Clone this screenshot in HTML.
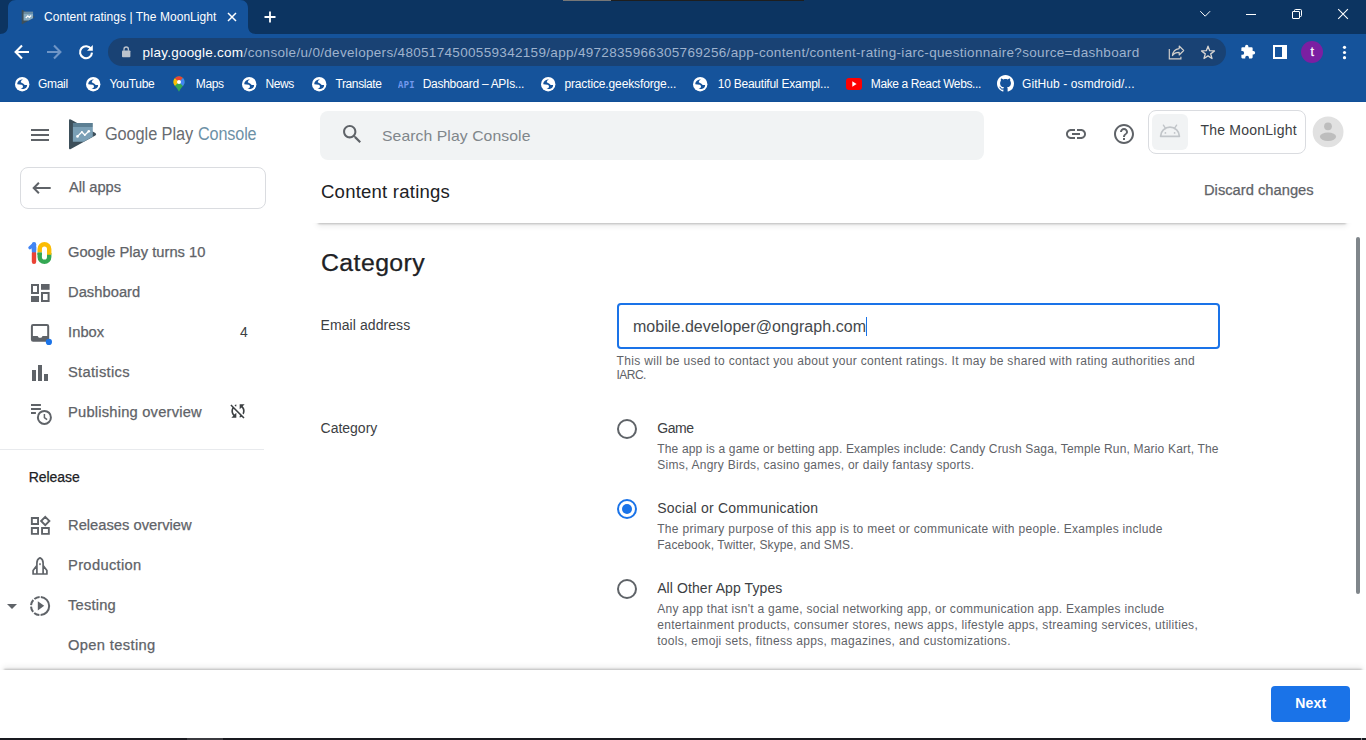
<!DOCTYPE html>
<html lang="en"><head><meta charset="utf-8"><title>Content ratings | The MoonLight</title>
<style>
html,body{margin:0;padding:0;}
body{width:1366px;height:740px;overflow:hidden;position:relative;background:#fff;font-family:"Liberation Sans",sans-serif;}
.a{position:absolute;}
.tx{position:absolute;white-space:nowrap;line-height:1;transform-origin:0 0;}
.m{-webkit-text-stroke:0.25px currentColor;}
svg{position:absolute;overflow:visible;}
</style></head><body>
<!-- ===== browser chrome ===== -->
<div class="a" style="left:0;top:0;width:1366px;height:34px;background:#0c3461;"></div>
<div class="a" style="left:0;top:34px;width:1366px;height:68px;background:#15539b;"></div>
<div class="a" style="left:0;top:101px;width:1366px;height:1px;background:#114f98;"></div>
<div class="a" style="left:563px;top:0;width:48px;height:1px;background:#777;"></div>
<div class="a" style="left:611px;top:0;width:193px;height:1px;background:#1e1e1e;"></div>
<!-- active tab -->
<svg style="left:0;top:0" width="260" height="34" viewBox="0 0 260 34"><path d="M0 34 C5 34 8 31 8 26 L8 8 C8 3 11 0 16 0 L240 0 C245 0 248 3 248 8 L248 26 C248 31 251 34 256 34 Z" fill="#15539b"/></svg>
<!-- favicon -->
<svg style="left:0;top:0" width="40" height="30" viewBox="0 0 40 30"><g transform="translate(21.7 9.8) scale(0.478) translate(-69 -119.2)">
<path d="M69 120.6 Q69 118.6 70.8 119.6 L95.4 133 Q97 134.2 95.4 135.4 L70.8 149 Q69 150 69 148 Z" fill="#3d4f5a"/>
<path d="M72.9 123 H92.8 V127 H72.9 Z" fill="#6a8da2"/>
<path d="M72.9 127 H92.8 V136.8 L83.6 141.8 H72.9 Z" fill="#86abc1"/>
<path d="M77.5 136.4 L81.9 132 L84.8 135 L88.8 131.2" stroke="#fff" stroke-width="2.4" fill="none"/>
</g></svg>
<!-- tab close -->
<svg style="left:227px;top:12px" width="10" height="10" viewBox="0 0 10 10"><path d="M1 1 L9 9 M9 1 L1 9" stroke="#fff" stroke-width="1.5" fill="none"/></svg>
<!-- new tab -->
<svg style="left:264px;top:11px" width="12" height="12" viewBox="0 0 12 12"><path d="M6 0.5 V11.5 M0.5 6 H11.5" stroke="#fff" stroke-width="1.8" fill="none"/></svg>
<!-- window controls -->
<svg style="left:1199px;top:10px" width="12" height="8" viewBox="1199 10 12 8"><path d="M1200.3 11.2 L1205.2 16.2 L1210.1 11.2" stroke="#fff" stroke-width="1" fill="none"/></svg>
<div class="a" style="left:1246px;top:14px;width:10px;height:1px;background:#fff;"></div>
<svg style="left:1291px;top:8px" width="12" height="12" viewBox="1291 8 12 12"><path d="M1292.5 12 Q1292.5 11.5 1293 11.5 H1299 Q1299.5 11.5 1299.5 12 V18 Q1299.5 18.5 1299 18.5 H1293 Q1292.5 18.5 1292.5 18 Z M1294.5 11.5 V10.5 Q1294.5 9.5 1295.5 9.5 H1300.5 Q1301.5 9.5 1301.5 10.5 V15.5 Q1301.5 16.5 1300.5 16.5 H1299.5" stroke="#fff" stroke-width="1" fill="none"/></svg>
<svg style="left:1337px;top:8px" width="12" height="12" viewBox="1337 8 12 12"><path d="M1338.2 9.2 L1347.9 18.9 M1347.9 9.2 L1338.2 18.9" stroke="#fff" stroke-width="1.05" fill="none"/></svg>
<!-- nav arrows -->
<svg style="left:14px;top:44px" width="16" height="16" viewBox="0 0 16 16"><path d="M15 8 H2 M8 1.6 L1.6 8 L8 14.4" stroke="#fff" stroke-width="2.1" fill="none"/></svg>
<svg style="left:46px;top:44px" width="16" height="16" viewBox="0 0 16 16"><path d="M1 8 H14 M8 1.6 L14.4 8 L8 14.4" stroke="#6f95c6" stroke-width="2.1" fill="none"/></svg>
<svg style="left:78px;top:44px" width="16" height="16" viewBox="0 0 16 16"><path d="M13.2 5.2 A6 6 0 1 0 14 8.6" stroke="#fff" stroke-width="2.1" fill="none"/><path d="M14.8 1 V6.8 H9 Z" fill="#fff"/></svg>
<!-- omnibox -->
<div class="a" style="left:108px;top:38px;width:1118px;height:28px;border-radius:14px;background:#194274;"></div>
<svg style="left:122px;top:46px" width="9" height="12" viewBox="0 0 9 12"><rect x="0" y="4.4" width="8.4" height="6.8" rx="0.9" fill="#bcc3cc"/><path d="M2 4.8 V3.2 A2.2 2.2 0 0 1 6.4 3.2 V4.8" stroke="#bcc3cc" stroke-width="1.3" fill="none"/></svg>
<!-- share -->
<svg style="left:1168px;top:45px" width="17" height="15" viewBox="1168 45 17 15"><path d="M1169.3 49 V58.8 H1180.9 V56.8" stroke="#d3d0cc" stroke-width="1.15" fill="none"/><path d="M1179.2 46 L1183.7 50.5 L1179.2 55 V52.4 C1176 52.4 1173.8 53.4 1172.4 55.6 C1172.8 52 1175 49.2 1179.2 48.6 Z" stroke="#d3d0cc" stroke-width="1.1" fill="none" stroke-linejoin="round"/></svg>
<!-- star -->
<svg style="left:1200px;top:45px" width="16" height="15" viewBox="1200 45 16 15"><path d="M1208.00 46.20 L1209.68 50.69 L1214.47 50.90 L1210.71 53.88 L1212.00 58.50 L1208.00 55.85 L1204.00 58.50 L1205.29 53.88 L1201.53 50.90 L1206.32 50.69 Z" stroke="#d9d6d3" stroke-width="1.3" fill="none" stroke-linejoin="round"/></svg>
<!-- puzzle -->
<svg style="left:1240.6px;top:44.4px" width="14.8" height="14.8" viewBox="0 0 16 16"><path d="M6.2 0.8 A1.8 1.8 0 0 1 8 2.6 V3.4 H11.4 A1.2 1.2 0 0 1 12.6 4.6 V7.6 H13.4 A1.9 1.9 0 0 1 13.4 11.4 H12.6 V14.4 A1.2 1.2 0 0 1 11.400000000000002 15.6 H8.6 V14.6 A2 2 0 0 0 4.6 14.6 V15.6 H1.6 A1.2 1.2 0 0 1 0.4 14.4 V11.6 H1.4 A2 2 0 0 0 1.4 7.6 H0.4 V4.6 A1.2 1.2 0 0 1 1.6 3.4 H4.4 V2.6 A1.8 1.8 0 0 1 6.2 0.8 Z" fill="#fff"/></svg>
<!-- side panel -->
<svg style="left:1273px;top:45px" width="14" height="14" viewBox="0 0 14 14"><path d="M0 0 H14 V14 H0 Z M2 2 V12 H9 V2 Z" fill="#fff" fill-rule="evenodd"/></svg>
<!-- avatar -->
<div class="a" style="left:1301px;top:41px;width:22px;height:22px;border-radius:50%;background:#7b1fa2;"></div>
<!-- menu dots -->
<svg style="left:1342px;top:45px" width="5" height="15" viewBox="0 0 5 15"><circle cx="2.5" cy="2.3" r="1.6" fill="#fff"/><circle cx="2.5" cy="7.5" r="1.6" fill="#fff"/><circle cx="2.5" cy="12.7" r="1.6" fill="#fff"/></svg>
<!-- bookmark icons -->
<svg width="0" height="0" style="position:absolute"><defs>
<g id="globe"><circle cx="7.2" cy="7.2" r="7.2" fill="#fff"/><path d="M2.3 7.3 C2.2 4.6 4.8 2.4 8 2.3 C6.4 3.4 5.6 4.4 5.9 5.4 C7 6 8 6 8.6 6.9 C9.6 8.2 11 8.2 12.1 7.9 C12.2 9.8 11.2 11 10 11.4 C8.6 12 6.8 12.2 5.6 11.8 C7 11.4 8 10.6 8 9.8 C8 8.8 7.6 8 6.6 7.7 C5.2 7.4 3.6 7.6 2.3 7.3 Z" fill="#15539b"/></g>
</defs></svg>
<svg style="left:14.8px;top:76.8px" width="15" height="15"><use href="#globe"/></svg>
<svg style="left:85.8px;top:76.8px" width="15" height="15"><use href="#globe"/></svg>
<svg style="left:241.7px;top:76.8px" width="15" height="15"><use href="#globe"/></svg>
<svg style="left:311.9px;top:76.8px" width="15" height="15"><use href="#globe"/></svg>
<svg style="left:541px;top:76.8px" width="15" height="15"><use href="#globe"/></svg>
<svg style="left:693.4px;top:76.8px" width="15" height="15"><use href="#globe"/></svg>
<!-- maps pin -->
<svg style="left:173px;top:76px" width="12" height="16" viewBox="0 0 12 16"><path d="M6 0.3 A5.6 5.6 0 0 0 0.4 5.9 C0.4 9.4 4 11 6 15.7 C8 11 11.6 9.4 11.6 5.9 A5.6 5.6 0 0 0 6 0.3 Z" fill="#34a853"/><path d="M6 0.3 A5.6 5.6 0 0 0 1.7 2.3 L6 5.9 L10 1.9 A5.6 5.6 0 0 0 6 0.3 Z" fill="#ea4335"/><path d="M1.7 2.3 A5.6 5.6 0 0 0 0.4 5.9 C0.4 7.4 1 8.6 2 9.8 L6 5.9 Z" fill="#fbbc04"/><path d="M10 1.9 L6 5.9 L9.8 10 C10.8 8.8 11.6 7.6 11.6 5.9 A5.6 5.6 0 0 0 10 1.9 Z" fill="#4285f4"/><circle cx="6" cy="5.9" r="2" fill="#fff"/></svg>
<!-- youtube -->
<svg style="left:846px;top:78px" width="16" height="12" viewBox="0 0 16 12"><rect x="0" y="0" width="16" height="12" rx="3.2" fill="#ff0000"/><path d="M6.3 3.2 L10.6 6 L6.3 8.8 Z" fill="#fff"/></svg>
<!-- github -->
<svg style="left:997px;top:75px" width="17" height="17" viewBox="0 0 16 16"><path fill="#fff" d="M8 0C3.58 0 0 3.58 0 8c0 3.54 2.29 6.53 5.47 7.59.4.07.55-.17.55-.38 0-.19-.01-.82-.01-1.49-2.01.37-2.53-.49-2.69-.94-.09-.23-.48-.94-.82-1.13-.28-.15-.68-.52-.01-.53.63-.01 1.08.58 1.23.82.72 1.21 1.87.87 2.33.66.07-.52.28-.87.51-1.07-1.78-.2-3.64-.89-3.64-3.95 0-.87.31-1.59.82-2.15-.08-.2-.36-1.02.08-2.12 0 0 .67-.21 2.2.82.64-.18 1.32-.27 2-.27s1.36.09 2 .27c1.53-1.04 2.2-.82 2.2-.82.44 1.1.16 1.92.08 2.12.51.56.82 1.27.82 2.15 0 3.07-1.87 3.75-3.65 3.95.29.25.54.73.54 1.48 0 1.07-.01 1.93-.01 2.2 0 .21.15.46.55.38A8.01 8.01 0 0 0 16 8c0-4.42-3.58-8-8-8z"/></svg>
<!-- ===== page ===== -->
<!-- hamburger -->
<div class="a" style="left:31px;top:129px;width:18px;height:2px;background:#5f6368;"></div>
<div class="a" style="left:31px;top:134px;width:18px;height:2px;background:#5f6368;"></div>
<div class="a" style="left:31px;top:139px;width:18px;height:2px;background:#5f6368;"></div>
<!-- logo -->
<svg style="left:68px;top:118px" width="30" height="33" viewBox="68 118 30 33">
<path d="M69 120.6 Q69 118.6 70.8 119.6 L95.4 133 Q97 134.2 95.4 135.4 L70.8 149 Q69 150 69 148 Z" fill="#3d4f5a"/>
<path d="M72.9 123 H92.8 V127 H72.9 Z" fill="#5c7f93"/>
<path d="M72.9 127 H92.8 V136.8 L83.6 141.8 H72.9 Z" fill="#7ba0b6"/>
<path d="M77.5 136.4 L81.9 132 L84.8 135 L88.8 131.2" stroke="#fff" stroke-width="1.3" fill="none"/>
<circle cx="77.5" cy="136.4" r="1.3" fill="#fff"/><circle cx="88.8" cy="131.2" r="1.3" fill="#fff"/><circle cx="81.9" cy="132" r="0.9" fill="#fff"/><circle cx="84.8" cy="135" r="0.9" fill="#fff"/>
</svg>
<!-- all apps -->
<div class="a" style="left:20px;top:167px;width:244px;height:40px;border:1px solid #dadce0;border-radius:8px;"></div>
<svg style="left:32px;top:180px" width="20" height="16" viewBox="32 180 20 16"><path d="M50.7 188 H34 M38.9 182.8 L33.7 188 L38.9 193.2" stroke="#5f6368" stroke-width="2" fill="none"/></svg>
<!-- search -->
<div class="a" style="left:320px;top:111px;width:664px;height:49px;border-radius:8px;background:#f1f3f4;"></div>
<svg style="left:339.9px;top:121.6px" width="24.6" height="24.6" viewBox="0 0 24 24"><path fill="#5f6368" d="M15.5 14h-.790l-.280-.270C15.410 12.590 16 11.110 16 9.500 16 5.910 13.090 3 9.500 3S3 5.910 3 9.500 5.910 16 9.500 16c1.610 0 3.090-.590 4.230-1.570l.270.280v.790l5 4.990L20.490 19l-4.990-5zm-6 0C7.010 14 5 11.990 5 9.500S7.010 5 9.500 5 14 7.010 14 9.500 11.990 14 9.500 14z"/></svg>
<!-- link icon -->
<svg style="left:1064px;top:122px" width="24" height="24" viewBox="0 0 24 24"><path fill="#5f6368" d="M3.9 12c0-1.71 1.390-3.100 3.100-3.100h4V7H7c-2.760 0-5 2.240-5 5s2.240 5 5 5h4v-1.900H7c-1.710 0-3.100-1.390-3.100-3.100zM8 13h8v-2H8v2zm9-6h-4v1.900h4c1.710 0 3.100 1.390 3.100 3.100s-1.390 3.100-3.100 3.100h-4V17h4c2.760 0 5-2.240 5-5s-2.240-5-5-5z"/></svg>
<!-- help icon -->
<svg style="left:1112px;top:122px" width="24" height="24" viewBox="0 0 24 24"><path fill="#5f6368" d="M11 18h2v-2h-2v2zm1-16C6.480 2 2 6.480 2 12s4.480 10 10 10 10-4.480 10-10S17.520 2 12 2zm0 18c-4.410 0-8-3.590-8-8s3.590-8 8-8 8 3.590 8 8-3.590 8-8 8zm0-14c-2.210 0-4 1.790-4 4h2c0-1.100.900-2 2-2s2 .900 2 2c0 2-3 1.750-3 5h2c0-2.250 3-2.500 3-5 0-2.210-1.790-4-4-4z"/></svg>
<!-- app chip -->
<div class="a" style="left:1148px;top:110px;width:156px;height:42px;border:1px solid #dadce0;border-radius:8px;"></div>
<div class="a" style="left:1152px;top:114px;width:36px;height:36px;border-radius:6px;background:#f1f3f4;"></div>
<svg style="left:1158px;top:123px" width="24" height="16" viewBox="1158 123 24 16"><path d="M1160.6 136.3 A9.4 9.1 0 0 1 1179.4 136.3 Z" stroke="#c1c5c9" stroke-width="1.7" fill="none" stroke-linejoin="round"/><path d="M1163.4 125.2 L1165.7 128.6 M1176.6 125.2 L1174.3 128.6" stroke="#c1c5c9" stroke-width="1.4" stroke-linecap="round"/><circle cx="1165.4" cy="132.9" r="0.9" fill="#c1c5c9"/><circle cx="1174.6" cy="132.9" r="0.9" fill="#c1c5c9"/></svg>
<!-- avatar -->
<svg style="left:1312px;top:116px" width="32" height="32" viewBox="1312 116 32 32"><circle cx="1328.1" cy="131.9" r="15.4" fill="#e1e1e1"/><circle cx="1328" cy="126.3" r="3.9" fill="#bdbdbd"/><ellipse cx="1328" cy="136.8" rx="8.1" ry="4.2" fill="#bdbdbd"/></svg>
<!-- header shadow -->
<div class="a" style="left:300px;top:223px;width:1066px;height:12px;overflow:hidden;"><div class="a" style="left:18px;top:-30px;width:1028px;height:30px;background:#fff;box-shadow:0 1px 2px rgba(0,0,0,.22),0 2px 6px 1px rgba(0,0,0,.08);"></div></div>
<!-- scrollbar -->
<div class="a" style="left:1356px;top:237px;width:4px;height:357px;border-radius:2px;background:#80868b;"></div>
<!-- sidebar icons -->
<!-- 10 -->
<svg style="left:28px;top:242px" width="24" height="22" viewBox="28 242 24 22">
<path d="M34 253 V261.8" stroke="#ea4335" stroke-width="4.4" stroke-linecap="round" fill="none"/>
<path d="M34 244.3 V250" stroke="#4285f4" stroke-width="4.4" stroke-linecap="round" fill="none"/>
<rect x="31.8" y="247" width="4.4" height="5.3" fill="#4285f4"/>
<path d="M29.9 247.7 L33.6 244.5" stroke="#4285f4" stroke-width="3.2" stroke-linecap="round" fill="none"/>
<path d="M39.7 253 V257 A4.75 4.75 0 0 0 49.2 257 V253" stroke="#34a853" stroke-width="4.4" fill="none"/>
<path d="M39.7 252.6 V249 A4.75 4.75 0 0 1 49.2 249 V254.8" stroke="#fbbc04" stroke-width="4.4" fill="none"/>
<path d="M37.5 252.4 H41.9 V255 H37.5 Z" fill="#34a853"/>
</svg>
<!-- dashboard -->
<svg style="left:31px;top:284px" width="19" height="18" viewBox="0 0 19 18"><path d="M1 1 H7 V9 H1 Z" stroke="#5f6368" stroke-width="2" fill="none"/><rect x="10" y="0" width="8.6" height="5.8" fill="#5f6368"/><rect x="0" y="12" width="8" height="6" fill="#5f6368"/><path d="M11 9 H17.6 V17 H11 Z" stroke="#5f6368" stroke-width="2" fill="none"/></svg>
<!-- inbox -->
<svg style="left:30px;top:323px" width="24" height="24" viewBox="30 323 24 24"><rect x="31.9" y="325" width="16.3" height="15.7" rx="1.2" stroke="#5f6368" stroke-width="2" fill="none"/><path d="M31.9 336 H37.6 L38.9 337.8 H41.3 L42.6 336 H48.2 V340.6 H31.9 Z" fill="#5f6368"/><circle cx="48.9" cy="341.9" r="3.1" fill="#1a73e8"/></svg>
<!-- statistics -->
<div class="a" style="left:32px;top:370px;width:4px;height:11px;background:#5f6368;"></div>
<div class="a" style="left:38px;top:365px;width:4px;height:16px;background:#5f6368;"></div>
<div class="a" style="left:44px;top:374px;width:4px;height:7px;background:#5f6368;"></div>
<!-- publishing overview -->
<svg style="left:30px;top:403px" width="24" height="24" viewBox="30 403 24 24"><path d="M31 405 H40.9 M31 409 H40.9 M31 413 H35.9" stroke="#5f6368" stroke-width="2" fill="none"/><circle cx="44.4" cy="417.4" r="6.5" stroke="#5f6368" stroke-width="2" fill="none"/><path d="M44.4 413.9 V417.7 L47.1 419.6" stroke="#5f6368" stroke-width="1.5" fill="none"/></svg>
<!-- sync disabled icon -->
<svg style="left:228.2px;top:401.2px" width="20" height="20" viewBox="0 0 24 24"><path fill="#3c4043" d="M10 6.35V4.26c-.8.21-1.55.54-2.23.96l1.46 1.46c.25-.12.5-.24.77-.33zm-7.14-.94l2.36 2.36C4.450 8.990 4 10.440 4 12c0 2.210.910 4.200 2.360 5.640L4 20h6v-6l-2.240 2.240C6.680 15.150 6 13.660 6 12c0-1 .25-1.940.68-2.770l8.080 8.080c-.25.130-.5.250-.770.340v2.090c.8-.210 1.550-.540 2.230-.960l2.360 2.360 1.270-1.270L4.140 4.140 2.860 5.410zM20 4h-6v6l2.240-2.240C17.320 8.850 18 10.340 18 12c0 1-.25 1.940-.68 2.770l1.460 1.460C19.550 15.010 20 13.560 20 12c0-2.210-.910-4.200-2.360-5.640L20 4z"/></svg>
<!-- divider -->
<div class="a" style="left:0;top:449px;width:264px;height:1px;background:#e8eaed;"></div>
<!-- releases overview -->
<svg style="left:30px;top:514px" width="22" height="22" viewBox="30 514 22 22"><path d="M31.85 518.05 H38.05 V524.05 H31.85 Z M31.85 527.95 H38.05 V533.85 H31.85 Z M42.05 527.95 H48.85 V533.85 H42.05 Z M45.25 516.85 L49.4 521 L45.25 525.15 L41.1 521 Z" stroke="#5f6368" stroke-width="1.9" fill="none"/></svg>
<!-- production -->
<svg style="left:31px;top:556px" width="18" height="20" viewBox="31 556 18 20"><path d="M36.9 574 V563 C36.9 560 38.6 558.4 40 557.8 C41.4 558.4 43.1 560 43.1 563 V574 M36.9 565.4 L33.1 570.6 V574 M43.1 565.4 L46.9 570.6 V574 M32.3 574 H47.7" stroke="#5f6368" stroke-width="1.7" fill="none" stroke-linejoin="round"/><rect x="39.3" y="563.2" width="1.4" height="1.9" fill="#5f6368"/></svg>
<!-- testing -->
<svg style="left:7px;top:603px" width="10" height="6" viewBox="7 603 10 6"><path d="M7 604 H17 L12 609 Z" fill="#5f6368"/></svg>
<svg style="left:29px;top:595px" width="22" height="22" viewBox="29 595 22 22"><path d="M40.1 596.9 A9.1 9.1 0 0 1 40.1 615.1" stroke="#5f6368" stroke-width="2" fill="none" stroke-dasharray="27.09 100" stroke-dashoffset="-0.75"/><path d="M40.1 615.1 A9.1 9.1 0 0 1 40.1 596.9" stroke="#5f6368" stroke-width="2" fill="none" stroke-dasharray="5.65 1.5" stroke-dashoffset="-0.75"/><path d="M37.8 601.2 L44.2 605.8 L37.8 610.4 Z" fill="#5f6368"/></svg>
<!-- main content -->
<div class="a" style="left:617px;top:303px;width:599px;height:42px;border:2px solid #1a73e8;border-radius:4px;"></div>
<div class="a" style="left:866px;top:317px;width:1px;height:19px;background:#1a73e8;"></div>
<!-- radios -->
<div class="a" style="left:617px;top:419px;width:16px;height:16px;border:2px solid #5f6368;border-radius:50%;"></div>
<div class="a" style="left:617px;top:499px;width:16px;height:16px;border:2px solid #1a73e8;border-radius:50%;"></div>
<div class="a" style="left:622px;top:504px;width:10px;height:10px;background:#1a73e8;border-radius:50%;"></div>
<div class="a" style="left:617px;top:579px;width:16px;height:16px;border:2px solid #5f6368;border-radius:50%;"></div>
<!-- footer -->
<div class="a" style="left:0;top:655px;width:1366px;height:15px;overflow:hidden;"><div class="a" style="left:4px;top:15px;width:1358px;height:30px;background:#fff;box-shadow:0 -1px 2px rgba(0,0,0,.22),0 -2px 6px 1px rgba(0,0,0,.08);"></div></div>
<div class="a" style="left:0;top:670px;width:1366px;height:68px;background:#fff;"></div>
<div class="a" style="left:1271px;top:686px;width:79px;height:36px;border-radius:4px;background:#1a73e8;"></div>
<div class="a" style="left:0;top:738px;width:1366px;height:2px;background:#191a20;"></div>
<div class="a" style="left:187px;top:738px;width:36px;height:2px;background:#3b3b40;"></div>
<div class="a" style="left:1361px;top:738px;width:1px;height:2px;background:#85868a;"></div>
<span class="tx" id="t0" style="left:44.00px;top:11.00px;font-size:12px;color:#ffffff;letter-spacing:0.043px;">Content ratings | The MoonLight</span>
<span class="tx" id="t1" style="left:142.50px;top:46.00px;font-size:13.5px;color:#ffffff;letter-spacing:0.228px;">play.google.com</span>
<span class="tx" id="t2" style="left:243.60px;top:46.00px;font-size:13.5px;color:#9fb3ce;letter-spacing:0.318px;">/console/u/0/developers/4805174500559342159/app/4972835966305769256/app-content/content-rating-iarc-questionnaire?source=dashboard</span>
<span class="tx" id="t3" style="left:38.00px;top:78.00px;font-size:12px;color:#ffffff;letter-spacing:-0.311px;">Gmail</span>
<span class="tx" id="t4" style="left:109.40px;top:78.00px;font-size:12px;color:#ffffff;letter-spacing:-0.309px;">YouTube</span>
<span class="tx" id="t5" style="left:195.80px;top:78.00px;font-size:12px;color:#ffffff;letter-spacing:-0.381px;">Maps</span>
<span class="tx" id="t6" style="left:265.40px;top:78.00px;font-size:12px;color:#ffffff;letter-spacing:-0.405px;">News</span>
<span class="tx" id="t7" style="left:335.50px;top:78.00px;font-size:12px;color:#ffffff;letter-spacing:-0.397px;">Translate</span>
<span class="tx" id="t8" style="left:422.70px;top:78.00px;font-size:12px;color:#ffffff;letter-spacing:-0.285px;">Dashboard – APIs...</span>
<span class="tx" id="t9" style="left:564.40px;top:78.00px;font-size:12px;color:#ffffff;letter-spacing:-0.130px;">practice.geeksforge...</span>
<span class="tx" id="t10" style="left:717.70px;top:78.00px;font-size:12px;color:#ffffff;letter-spacing:-0.230px;">10 Beautiful Exampl...</span>
<span class="tx" id="t11" style="left:870.80px;top:78.00px;font-size:12px;color:#ffffff;letter-spacing:-0.386px;">Make a React Webs...</span>
<span class="tx" id="t12" style="left:1022.00px;top:78.00px;font-size:12px;color:#ffffff;letter-spacing:0.090px;">GitHub - osmdroid/...</span>
<span class="tx" id="t13" style="left:397.80px;top:80.00px;font-size:11px;color:#7298ee;letter-spacing:0.469px;transform:scaleX(0.8);font-family:'Liberation Mono',monospace;font-weight:700;">API</span>
<span class="tx m" id="t14" style="left:1310.50px;top:46.00px;font-size:12.5px;color:#ffffff;">t</span>
<span class="tx" id="t15" style="left:104.60px;top:125.90px;font-size:17.6px;color:#686c71;letter-spacing:-0.113px;transform:scaleX(0.93);">Google Play</span>
<span class="tx" id="t16" style="left:197.60px;top:125.90px;font-size:17.6px;color:#6d91a6;letter-spacing:-0.144px;transform:scaleX(0.92);">Console</span>
<span class="tx m" id="t17" style="left:69.30px;top:180.00px;font-size:14px;color:#5f6368;letter-spacing:-0.041px;transform:scaleX(1.05);">All apps</span>
<span class="tx" id="t18" style="left:382.30px;top:128.00px;font-size:15px;color:#80868b;letter-spacing:0.070px;transform:scaleX(1.05);">Search Play Console</span>
<span class="tx" id="t19" style="left:320.90px;top:183.50px;font-size:17.5px;color:#202124;letter-spacing:0.202px;transform:scaleX(1.06);">Content ratings</span>
<span class="tx m" id="t20" style="left:1204.30px;top:183.00px;font-size:14px;color:#5f6368;letter-spacing:0.007px;transform:scaleX(1.05);">Discard changes</span>
<span class="tx" id="t21" style="left:1200.40px;top:123.00px;font-size:14px;color:#3c4043;letter-spacing:0.233px;">The MoonLight</span>
<span class="tx m" id="t22" style="left:68.40px;top:245.00px;font-size:14px;color:#5f6368;letter-spacing:0.006px;transform:scaleX(1.05);">Google Play turns 10</span>
<span class="tx m" id="t23" style="left:68.40px;top:285.00px;font-size:14px;color:#5f6368;letter-spacing:0.033px;transform:scaleX(1.05);">Dashboard</span>
<span class="tx m" id="t24" style="left:68.40px;top:325.00px;font-size:14px;color:#5f6368;letter-spacing:0.057px;transform:scaleX(1.05);">Inbox</span>
<span class="tx" id="t25" style="left:240.00px;top:325.00px;font-size:14px;color:#3c4043;letter-spacing:-0.597px;">4</span>
<span class="tx m" id="t26" style="left:68.40px;top:365.00px;font-size:14px;color:#5f6368;letter-spacing:0.284px;transform:scaleX(1.05);">Statistics</span>
<span class="tx m" id="t27" style="left:68.40px;top:405.00px;font-size:14px;color:#5f6368;letter-spacing:0.200px;transform:scaleX(1.05);">Publishing overview</span>
<span class="tx m" id="t28" style="left:28.80px;top:470.00px;font-size:14px;color:#202124;letter-spacing:-0.062px;">Release</span>
<span class="tx m" id="t29" style="left:68.40px;top:518.00px;font-size:14px;color:#5f6368;letter-spacing:0.013px;transform:scaleX(1.05);">Releases overview</span>
<span class="tx m" id="t30" style="left:68.40px;top:558.00px;font-size:14px;color:#5f6368;letter-spacing:0.319px;transform:scaleX(1.05);">Production</span>
<span class="tx m" id="t31" style="left:68.40px;top:598.00px;font-size:14px;color:#5f6368;letter-spacing:0.178px;transform:scaleX(1.05);">Testing</span>
<span class="tx m" id="t32" style="left:68.40px;top:638.00px;font-size:14px;color:#5f6368;letter-spacing:0.341px;transform:scaleX(1.05);">Open testing</span>
<span class="tx" id="t33" style="left:320.90px;top:252.00px;font-size:23px;color:#202124;letter-spacing:0.384px;transform:scaleX(1.08);-webkit-text-stroke:0.25px currentColor;">Category</span>
<span class="tx" id="t34" style="left:320.60px;top:318.00px;font-size:14px;color:#3c4043;letter-spacing:0.075px;">Email address</span>
<span class="tx" id="t35" style="left:632.90px;top:319.00px;font-size:16px;color:#45494c;letter-spacing:0.060px;">mobile.developer@ongraph.com</span>
<span class="tx" id="t36" style="left:616.60px;top:355.00px;font-size:12px;color:#5f6368;letter-spacing:0.318px;">This will be used to contact you about your content ratings. It may be shared with rating authorities and</span>
<span class="tx" id="t37" style="left:616.60px;top:369.00px;font-size:12px;color:#5f6368;letter-spacing:-0.554px;">IARC.</span>
<span class="tx" id="t38" style="left:320.60px;top:421.00px;font-size:14px;color:#3c4043;letter-spacing:-0.016px;">Category</span>
<span class="tx" id="t39" style="left:657.30px;top:421.00px;font-size:14px;color:#3c4043;letter-spacing:-0.475px;">Game</span>
<span class="tx" id="t40" style="left:657.20px;top:443.00px;font-size:12px;color:#5f6368;letter-spacing:0.175px;">The app is a game or betting app. Examples include: Candy Crush Saga, Temple Run, Mario Kart, The</span>
<span class="tx" id="t41" style="left:657.20px;top:459.00px;font-size:12px;color:#5f6368;letter-spacing:0.262px;">Sims, Angry Birds, casino games, or daily fantasy sports.</span>
<span class="tx" id="t42" style="left:657.20px;top:501.00px;font-size:14px;color:#3c4043;letter-spacing:0.240px;">Social or Communication</span>
<span class="tx" id="t43" style="left:657.20px;top:523.00px;font-size:12px;color:#5f6368;letter-spacing:0.315px;">The primary purpose of this app is to meet or communicate with people. Examples include</span>
<span class="tx" id="t44" style="left:657.20px;top:539.00px;font-size:12px;color:#5f6368;letter-spacing:0.093px;">Facebook, Twitter, Skype, and SMS.</span>
<span class="tx" id="t45" style="left:657.20px;top:581.00px;font-size:14px;color:#3c4043;letter-spacing:0.090px;">All Other App Types</span>
<span class="tx" id="t46" style="left:657.20px;top:603.00px;font-size:12px;color:#5f6368;letter-spacing:0.281px;">Any app that isn't a game, social networking app, or communication app. Examples include</span>
<span class="tx" id="t47" style="left:657.20px;top:619.00px;font-size:12px;color:#5f6368;letter-spacing:0.299px;">entertainment products, consumer stores, news apps, lifestyle apps, streaming services, utilities,</span>
<span class="tx" id="t48" style="left:657.20px;top:635.00px;font-size:12px;color:#5f6368;letter-spacing:0.309px;">tools, emoji sets, fitness apps, magazines, and customizations.</span>
<span class="tx" id="t49" style="left:1295.30px;top:696.00px;font-size:14px;color:#ffffff;font-weight:700;letter-spacing:0.180px;">Next</span>
</body></html>
